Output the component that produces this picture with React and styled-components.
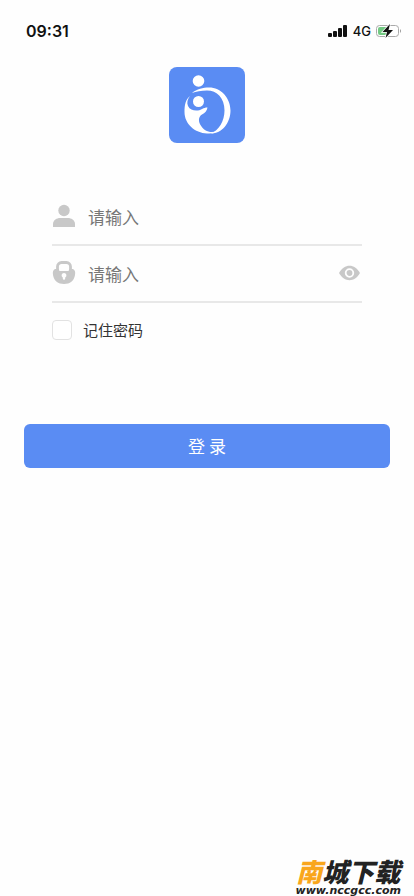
import React, {useState} from 'react';
import styled, {createGlobalStyle, ThemeProvider} from 'styled-components';

const theme = {
  primary: '#5a8cf3',
  iconColor: '#c8c8c8',
  lineColor: '#e8e8e8',
  labelColor: '#333',
  placeholderColor: '#777',
  fontFamily: '"Noto Sans CJK SC", sans-serif'
};

const GlobalStyle = createGlobalStyle`
  * {
    box-sizing: border-box;
  }

  body {
    margin: 0;
    background: #fefefe;
  }
`;

const Page = styled.div`
  position: relative;
  display: flex;
  flex-direction: column;
  min-height: 100vh;
  font-family: ${props => props.theme.fontFamily};
`;

const StatusBar = styled.header`
  display: flex;
  align-items: center;
  justify-content: space-between;
  height: 62px;
  padding: 0 12px 0 26px;
  color: #111;
  font-family: Inter, sans-serif;
`;

const Time = styled.time`
  font-size: 16px;
  font-weight: 600;
`;

const Indicators = styled.div`
  display: flex;
  align-items: center;
  gap: 5px;
  font-size: 13px;
  font-weight: 500;
`;

const LogoWrapper = styled.div`
  display: flex;
  justify-content: center;
  padding-top: 5px;
`;

const LoginForm = styled.form`
  display: flex;
  flex-direction: column;
  padding: 46px 24px 0;
`;

const Fields = styled.div`
  padding: 0 28px;
`;

const Field = styled.div`
  display: flex;
  align-items: center;
  height: 57px;
  border-bottom: 2px solid ${props => props.theme.lineColor};
`;

const FieldLabel = styled.label`
  display: flex;
  width: 36px;
  flex-shrink: 0;
`;

const StyledInput = styled.input`
  flex: 1;
  min-width: 0;
  height: 100%;
  padding: 0;
  border: 0;
  outline: 0;
  background: transparent;
  color: ${props => props.theme.labelColor};
  font-family: inherit;
  font-size: 17px;

  &::placeholder {
    color: ${props => props.theme.placeholderColor};
    opacity: 1;
  }
`;

const ToggleButton = styled.button`
  display: flex;
  padding: 0 2px 2px 0;
  border: 0;
  background: none;
  cursor: pointer;
`;

const Remember = styled.label`
  display: flex;
  align-items: center;
  gap: 11px;
  height: 54px;
  color: ${props => props.theme.labelColor};
  font-size: 15px;
  line-height: 20px;
`;

const Checkbox = styled.input`
  appearance: none;
  width: 20px;
  height: 20px;
  margin: 0;
  border: 1px solid #e2e2e2;
  border-radius: 4px;
  background: #fff;

  &:checked {
    border-color: ${props => props.theme.primary};
    background: ${props => props.theme.primary};
  }
`;

const SubmitButton = styled.button`
  height: 44px;
  margin-top: 67px;
  padding: 0 0 2px;
  border: 0;
  border-radius: 6px;
  background: ${props => props.theme.primary};
  color: #fff;
  font-family: inherit;
  font-size: 17px;
  cursor: pointer;
`;

const SiteMark = styled.div`
  position: absolute;
  right: 13px;
  bottom: 0;
  display: flex;
  flex-direction: column;
  align-items: center;
  color: #222;
  font-style: italic;
`;

const SiteName = styled.div`
  font-family: "Noto Sans CJK SC", sans-serif;
  font-size: 26px;
  font-weight: 900;
  line-height: 30px;
`;

const Accent = styled.span`
  color: #f9a61c;
`;

const SiteUrl = styled.div`
  font-family: "DejaVu Sans", sans-serif;
  font-size: 11px;
  font-weight: 700;
  line-height: 10px;
`;

const SignalIcon = () => (
  <svg width="20" height="12" viewBox="0 0 20 12" fill="#111">
    <rect x="0" y="8" width="4" height="4" rx="1" />
    <rect x="5" y="6" width="4" height="6" rx="1" />
    <rect x="10" y="3" width="4" height="9" rx="1" />
    <rect x="15" y="0" width="4" height="12" rx="1" />
  </svg>
);

const BatteryIcon = () => (
  <svg width="26" height="14" viewBox="0 0 26 14">
    <rect x="0.5" y="1.5" width="22" height="11" rx="3" fill="#fff" stroke="#aaa" />
    <path d="M4 3h7v8H4a2 2 0 0 1-2-2V5a2 2 0 0 1 2-2z" fill="#72c982" />
    <path d="M24 5q2 2 0 4z" fill="#999" />
    <path d="M14 0L6.500 8H11L9.500 14L17 6H12.500z" fill="#111" stroke="#fff" strokeWidth="1.500" paintOrder="stroke" />
  </svg>
);

const Logo = () => (
  <svg width="76" height="76" viewBox="0 0 76 76" role="img" aria-label="logo">
    <rect width="76" height="76" rx="8" fill={theme.primary} />
    <g fill="#fff">
      <circle cx="29.500" cy="14" r="5.800" />
      <circle cx="29.500" cy="34.500" r="5.500" />
      <path d="M23 26C28 22 34 20.500 40 20.500C52 20.500 61.500 31 61.500 43.500C61.500 56 53 66.500 42 66.500C50 63 55.500 54 55.500 43.500C55.500 31 48 23.500 38 23.500C32 23.500 27 24.500 23 26z" />
      <path d="M21 29C18.500 32 17.500 36 19 39C21 43 25 44 29 43.500C33 43 34 40.500 38.500 40.500C38 44 36 46 33 47.500C29.500 49.500 29 54 31.500 58C34 62.500 38 65 43 65C46 65 49 63.500 51 62C47 66 43 67 38 66.500C26 66 15.500 57 15.500 45C15.500 38 16.500 32.500 21 29z" />
    </g>
  </svg>
);

const UserIcon = () => (
  <svg width="24" height="26" viewBox="0 0 24 26" fill={theme.iconColor}>
    <circle cx="12" cy="6.500" r="5.700" />
    <path d="M1 23V20C1 16 5 14 8 14H16C19 14 23 16 23 20V23z" />
  </svg>
);

const LockIcon = () => (
  <svg width="24" height="26" viewBox="0 0 24 26">
    <path d="M5.500 11V5.500a4 4 0 0 1 4-4h5a4 4 0 0 1 4 4v5.500" fill="none" stroke={theme.iconColor} strokeWidth="2.800" />
    <path d="M3 8H21C23 9 23.500 11 23 14C22 20 18 23 12 23S2 20 1 14C0.500 11 1 9 3 8z" fill={theme.iconColor} />
    <path d="M7 6h10v3a1 1 0 0 1-1 1h-8a1 1 0 0 1-1-1z" fill="#fefefe" />
    <path d="M12 12a2.400 2.400 0 0 1 1.200 4.500V17.500a1.200 1.200 0 0 1-2.400 0v-1A2.400 2.400 0 0 1 12 12z" fill="#fefefe" />
  </svg>
);

const EyeIcon = () => (
  <svg width="21" height="16" viewBox="0 0 21 16">
    <path d="M0 8C3 3 6.500 0.800 10.500 0.800S18 3 21 8C18 13 14.500 15.200 10.500 15.200S3 13 0 8z" fill={theme.iconColor} />
    <circle cx="10.500" cy="8" r="3.800" fill={theme.iconColor} stroke="#fefefe" strokeWidth="1.800" />
  </svg>
);

const App = () => {
  const [account, setAccount] = useState('');
  const [password, setPassword] = useState('');
  const [remember, setRemember] = useState(false);
  const [visible, setVisible] = useState(false);

  const onSubmit = (e) => {
    e.preventDefault();
  };

  return (
    <ThemeProvider theme={theme}>
      <GlobalStyle />
      <Page>
        <StatusBar>
          <Time>09:31</Time>
          <Indicators>
            <SignalIcon />
            <span>4G</span>
            <BatteryIcon />
          </Indicators>
        </StatusBar>
        <LogoWrapper>
          <Logo />
        </LogoWrapper>
        <LoginForm onSubmit={onSubmit}>
          <Fields>
            <Field>
              <FieldLabel htmlFor="account" aria-label="账号">
                <UserIcon />
              </FieldLabel>
              <StyledInput
                id="account"
                type="text"
                placeholder="请输入"
                value={account}
                onChange={e => setAccount(e.target.value)}
              />
            </Field>
            <Field>
              <FieldLabel htmlFor="password" aria-label="密码">
                <LockIcon />
              </FieldLabel>
              <StyledInput
                id="password"
                type={visible ? 'text' : 'password'}
                placeholder="请输入"
                value={password}
                onChange={e => setPassword(e.target.value)}
              />
              <ToggleButton type="button" aria-label="显示密码" onClick={() => setVisible(!visible)}>
                <EyeIcon />
              </ToggleButton>
            </Field>
            <Remember>
              <Checkbox
                type="checkbox"
                checked={remember}
                onChange={e => setRemember(e.target.checked)}
              />
              记住密码
            </Remember>
          </Fields>
          <SubmitButton type="submit">登 录</SubmitButton>
        </LoginForm>
        <SiteMark>
          <SiteName><Accent>南</Accent>城下载</SiteName>
          <SiteUrl>www.nccgcc.com</SiteUrl>
        </SiteMark>
      </Page>
    </ThemeProvider>
  );
};

export default App;
